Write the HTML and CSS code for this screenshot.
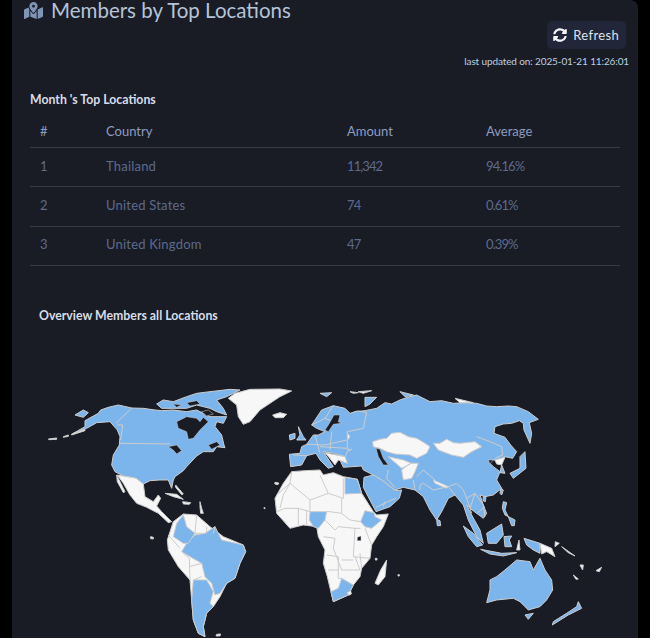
FILE: index.html
```html
<!DOCTYPE html>
<html lang="en">
<head>
<meta charset="utf-8">
<title>Members by Top Locations</title>
<link rel="stylesheet" href="styles.css">
</head>
<body>
<main class="card">
  <h1 class="title">
    <svg class="title-icon" viewBox="0 0 576 512"><path d="M288 0c-69.59 0-126 56.41-126 126 0 56.26 82.35 158.8 113.9 196.02 6.39 7.54 17.82 7.54 24.2 0C331.65 284.8 414 182.26 414 126 414 56.41 357.59 0 288 0zm0 168c-23.2 0-42-18.8-42-42s18.8-42 42-42 42 18.8 42 42-18.8 42-42 42zM20.12 215.95A32.006 32.006 0 0 0 0 245.66v250.32c0 11.32 11.43 19.06 21.94 14.86L160 448V214.92c-8.84-15.98-16.07-31.54-21.25-46.42L20.12 215.95zM288 359.67c-14.07 0-27.38-6.18-36.51-16.96-19.66-23.2-40.57-49.62-59.49-76.72V448l192 64V266c-18.92 27.09-39.82 53.52-59.49 76.72-9.13 10.77-22.44 16.95-36.51 16.95zm266.06-198.51L416 224v288l139.88-55.95A31.996 31.996 0 0 0 576 426.34V176.02c0-11.32-11.43-19.06-21.94-14.86z"/></svg>
    Members by Top Locations
  </h1>
  <div class="toolbar">
    <button class="refresh" type="button">
      <svg class="refresh-icon" viewBox="0 0 512 512"><path d="M370.72 133.28C339.458 104.008 298.888 87.962 255.848 88c-77.458.068-144.328 53.178-162.791 126.85-1.344 5.363-6.122 9.15-11.651 9.15H24.103c-7.498 0-13.194-6.807-11.807-14.176C33.933 94.924 134.813 8 256 8c66.448 0 126.791 26.136 171.315 68.685L463.03 40.97C478.149 25.851 504 36.559 504 57.941V192c0 13.255-10.745 24-24 24H345.941c-21.382 0-32.09-25.851-16.971-40.971l41.75-41.749zM32 296h134.059c21.382 0 32.09 25.851 16.971 40.971l-41.75 41.75c31.262 29.273 71.835 45.319 114.876 45.28 77.418-.07 144.315-53.144 162.787-126.849 1.344-5.363 6.122-9.15 11.651-9.15h57.304c7.498 0 13.194 6.807 11.807 14.176C478.067 417.076 377.187 504 256 504c-66.448 0-126.791-26.136-171.315-68.685L48.97 471.03C33.851 486.149 8 475.441 8 454.059V320c0-13.255 10.745-24 24-24z"/></svg>
      Refresh
    </button>
    <p class="updated">last updated on: 2025-01-21 11:26:01</p>
  </div>
  <h2 class="section-title">Month 's Top Locations</h2>
  <table class="locations">
    <thead>
      <tr><th class="c-num">#</th><th class="c-country">Country</th><th class="c-amount">Amount</th><th>Average</th></tr>
    </thead>
    <tbody>
      <tr><td class="num">1</td><td>Thailand</td><td class="num">11,342</td><td class="num">94.16%</td></tr>
      <tr><td class="num">2</td><td>United States</td><td class="num">74</td><td class="num">0.61%</td></tr>
      <tr><td class="num">3</td><td>United Kingdom</td><td class="num">47</td><td class="num">0.39%</td></tr>
    </tbody>
  </table>
  <h2 class="section-title overview">Overview Members all Locations</h2>
  <svg class="map" viewBox="30 380 590 258" role="img" aria-label="World map of members">
    <!-- Americas: 3x coordinates from (30,380) -->
    <g transform="translate(30 380) scale(.3333)" class="land">
      <path class="w" d="M615 40L660 28 750 27 785 33 750 50 720 70 690 90 660 125 640 133 625 110 620 75 595 55Z"/>
      <path class="w" d="M728 105L750 98 770 103 760 113 735 113Z"/>
      <path class="b" d="M165 122L205 100 212 90 235 82 265 75 305 84 340 85 375 90 395 92 430 90 470 95 500 90 520 100 540 110 590 110 580 130 560 125 555 140 575 165 582 195 585 203 560 200 550 215 520 215 500 228 470 260 460 272 435 290 430 300 425 325 415 300 390 300 360 302 340 312 318 295 280 288 255 275 245 255 250 225 268 195 270 170 262 150 240 125 200 128 170 145 130 160 165 140Z"/>
      <path class="b" d="M380 72L400 60 430 65 470 50 500 40 540 35 600 28 630 30 590 50 560 60 580 85 590 105 560 95 540 85 500 75 470 85 430 85 395 85Z"/>
      <path class="b" d="M135 105L160 90 175 98 160 112Z"/>
      <path class="sea" d="M440 125L470 110 500 115 510 125 520 112 535 125 510 150 490 175 475 178 470 155 445 145Z"/>
      <path class="sea" d="M415 200L440 195 455 212 440 222 430 210ZM470 68L500 62 510 72 480 78ZM430 72L455 74 440 82ZM515 95L535 90 550 102 530 108ZM535 195L560 185 570 195 545 208Z"/>
      <path class="ln" d="M305 84L258 130M270 190L420 192M262 135L278 135 272 180"/>
      <path class="w" d="M262 285L318 295 340 312 345 350 370 365 385 345 392 355 380 378 395 395 410 410 425 425 415 428 385 400 350 382 320 370 300 345 280 310Z"/>
      <path class="w" d="M260 285L285 335 280 338 262 305ZM405 340L440 343 460 358 430 350ZM458 365L482 368 478 373 460 372ZM55 177L80 174 80 178 57 179ZM100 170L115 165 115 169 100 172ZM125 162L165 148 165 152 125 165ZM362 470L370 472 370 477 362 476ZM560 763L572 762 570 768 558 768ZM735 307L746 309 744 313 735 311ZM702 383L705 383 705 386 702 386ZM437 315L460 342 455 344 437 322ZM510 365L515 385 520 400 512 400 510 380Z"/>
      <path class="w" d="M430 425L460 402 500 405 540 440 580 470 640 495 647 515 630 550 615 595 590 610 570 650 550 680 530 700 520 740 525 770 505 760 490 720 485 660 480 600 445 560 415 510 412 480Z"/>
      <path class="b" d="M455 515L470 490 495 465 525 460 555 440 575 480 640 495 647 515 630 550 615 595 590 610 570 640 555 645 545 610 525 590 515 550 480 530Z"/>
      <path class="b" d="M430 470L440 430 460 405 470 440 495 460 475 490 460 490Z"/>
      <path class="b" d="M490 600L530 600 550 635 540 670 550 680 530 700 520 740 525 770 505 760 490 720 485 660Z"/>
      <path class="ln" d="M415 465L450 505M455 515L478 535 480 600M478 560L515 550M515 590L490 600M500 405L495 460 525 460M530 440L530 460M555 440L550 462"/>
    </g>
    <!-- Asia and Oceania: 3x coordinates from (320,380) -->
    <g transform="translate(320 380) scale(.3333)" class="land">
      <path class="b" d="M75 115L105 95 135 92 170 85 195 68 215 72 240 60 262 52 290 45 330 65 365 62 400 70 435 68 470 70 500 78 530 80 565 78 590 80 625 95 655 118 628 128 635 160 630 190 612 150 610 130 598 122 575 130 550 132 525 140 522 160 555 172 572 195 590 215 578 235 555 230 540 240 520 240 505 245 520 260 540 275 530 300 545 325 520 345 495 350 480 345 490 375 500 400 490 415 470 400 450 385 440 375 455 405 480 450 490 490 470 470 445 420 430 375 405 345 385 355 365 395 350 420 330 390 310 350 285 330 250 322 225 330 185 300 150 280 130 270 125 258 70 262 60 240 75 225 85 208 75 190 60 180Z"/>
      <path class="w" d="M158 185L180 178 200 175 215 160 240 157 265 170 290 175 315 190 330 200 320 220 290 235 270 225 225 222 200 215 180 205 160 200Z"/>
      <path class="w" d="M340 190L360 190 380 178 400 188 420 190 465 185 485 200 455 215 430 232 395 225 355 210Z"/>
      <path class="w" d="M245 270L270 250 295 250 285 275 275 295 250 300ZM205 230L250 240 275 250 245 265ZM340 300L385 320 380 325 345 310ZM525 240L555 232 545 255 530 252Z"/>
      <path class="w" d="M55 165L75 155 90 168 85 178 60 178Z"/>
      <path class="ln" d="M470 170L510 185 545 200 548 225 525 235M290 290L310 270 345 300M300 330L300 315 310 310 340 330 385 320 410 310 430 330 440 355 465 340 490 375 495 410M385 320L405 345M440 355L455 400M465 340L450 385M470 400L495 380M225 322L200 295 205 270M280 300L285 330M40 210L75 225"/>
      <path class="sea" d="M168 205L180 208 190 235 205 255 190 255 175 230ZM505 240L520 240 510 252Z"/>
      <path class="b" d="M600 230L615 215 618 265 580 295 570 280 600 265ZM545 255L555 280 540 278ZM543 325L550 330 545 345 540 340ZM490 350L498 352 496 365 489 362ZM350 418L360 422 362 437 352 437ZM550 365L560 368 555 390 565 410 555 405 547 385ZM565 410L585 420 583 437 575 437ZM430 438L460 460 488 495 470 500 445 470ZM482 508L545 520 590 518 550 528 510 522ZM500 460L545 432 550 465 530 490 505 490ZM552 470L575 468 568 480 575 500 555 500ZM612 475L660 490 660 520 640 510 620 495ZM510 600L530 590 555 570 590 540 630 545 640 570 660 535 675 570 695 600 698 630 680 660 660 680 625 690 600 665 580 655 530 660 500 668 510 630ZM615 705L640 700 625 718ZM697 735L745 705 785 685 775 665 770 680 740 700 700 725ZM135 52L170 52 150 72 135 80ZM240 35L280 45 255 50ZM0 40L35 38 20 50Z"/>
      <path class="w" d="M660 490L695 505 705 530 680 515 665 522ZM725 500L765 528 745 518ZM780 555L790 555 788 570ZM828 572L845 562 838 575ZM760 585L775 597 768 598ZM90 35L115 38 100 40ZM115 35L155 32 130 40ZM405 55L460 68 420 68ZM590 510L600 510 597 480ZM706 485L718 490 705 500ZM200 540L195 590 175 615 165 610 182 570Z"/>
    </g>
    <!-- Africa and Arabia: 3x coordinates from (270,470) -->
    <g transform="translate(270 470) scale(.3333)" class="land">
      <path class="w" d="M65 5L105 2 150 0 160 15 190 8 220 20 262 28 275 70 310 125 320 135 355 132 340 170 320 200 305 225 300 265 275 295 270 320 250 345 235 375 190 395 172 320 160 280 165 240 145 200 140 170 100 165 60 175 20 130 15 85 40 40Z"/>
      <path class="b" d="M120 125L170 125 165 150 145 175 130 170 118 150Z"/>
      <path class="b" d="M225 22L262 28 275 70 225 72Z"/>
      <path class="b" d="M285 122L312 128 315 140 335 150 305 175 285 170 272 155Z"/>
      <path class="b" d="M205 355L215 325 250 345 235 375 190 395 183 365Z"/>
      <path class="w" d="M232 368L242 362 244 372 236 376ZM15 38L26 40 24 44 15 42ZM316 265L321 265 321 270 316 270ZM384 314L388 314 388 318 384 318Z"/>
      <path class="ln" d="M65 5L60 40 20 75M60 40L120 90 175 70 150 15M175 70L220 85 220 25M120 90L120 125 85 115 45 115 20 125M85 115L85 165M110 120L110 165M170 125L180 125 215 130 215 85M215 130L240 150 272 155M165 150L195 180 205 170 255 175 272 175M160 200L195 205 190 235 215 300 270 300M255 175L250 260 300 265M285 175L305 225M170 255L205 260 205 325M205 300L175 300M215 325L205 325M255 260L270 300M215 270L250 270M270 250L275 295M60 40L40 75 30 115"/>
      <path class="sea" d="M262 202L273 198 273 212 262 212Z"/>
      <path class="b" d="M282 22L310 15 335 30 375 62 395 60 388 85 360 110 318 125 280 52Z"/>
      <path class="ln" d="M318 112L360 92 378 85M340 110L345 95"/>
    </g>
    <!-- Europe: 3x coordinates from (270,385) -->
    <g transform="translate(270 385) scale(.3333)" class="land">
      <path class="b" d="M125 120L155 75 190 62 225 70 240 85 262 78 290 82 280 130 232 140 232 195 245 193 232 200 225 215 190 205 160 200 190 245 175 250 150 225 138 205 110 212 95 240 62 245 58 208 90 205 95 185 110 178 130 150 145 150 165 140 140 130Z"/>
      <path class="b" d="M85 125L100 155 108 165 80 165 90 150ZM58 150L75 145 75 160 60 165Z"/>
      <path class="w" d="M165 203L225 215 232 235 205 225 195 240 178 218Z"/>
      <path class="ln" d="M135 150L150 205M110 178L165 180 230 165M150 185L232 190M185 140L180 195M70 210L110 212M125 120L165 100 190 62M165 100L205 115"/>
      <path class="sea" d="M175 120L192 90 210 90 205 110 215 115 190 118 175 140 165 135Z"/>
    </g>
  </svg>
</main>
</body>
</html>
```

FILE: styles.css
```css
* { box-sizing: border-box; }
html, body { margin: 0; height: 638px; overflow: hidden; background: #000; }
body { font-family: "Lato", "Noto Sans", sans-serif; }
.card {
  margin: 0 12px;
  height: 660px;
  padding: 0 18px;
  background: #191c25;
  border-radius: 0 8px 0 0;
}
.title {
  display: flex;
  align-items: center;
  gap: 8px;
  margin: 0 0 0 -6px;
  height: 20px;
  font-size: 20.5px;
  line-height: 20px;
  font-weight: 400;
  color: #b5c3d9;
}
.title-icon { width: 19px; height: 17px; fill: #8095b6; }
.toolbar {
  display: flex;
  flex-direction: column;
  align-items: flex-end;
  margin-right: -9px;
}
.refresh {
  display: flex;
  align-items: center;
  gap: 6px;
  height: 28px;
  margin: 1px 3px 0 0;
  padding: 0 7px 0 6px;
  border: 0;
  border-radius: 5px;
  background: #212638;
  color: #dce3ee;
  font: 400 13px "Lato", sans-serif;
  letter-spacing: .35px;
}
.refresh-icon { width: 14px; height: 14px; fill: #f4f6fa; }
.updated {
  margin: 5px 0 0;
  font-size: 10px;
  line-height: 14px;
  color: #bdcfe0;
  letter-spacing: -.12px;
}
.section-title {
  margin: 24px 0 0;
  font-size: 12.3px;
  line-height: 16px;
  font-weight: 700;
  color: #d7dde8;
}
.locations {
  width: 590px;
  border-collapse: collapse;
  table-layout: fixed;
  font-size: 13px;
}
.locations th, .locations td {
  padding: 0 0 0 10px;
  text-align: left;
  border-bottom: 1px solid #383b46;
}
.locations th {
  height: 39.5px;
  padding-bottom: 8px;
  vertical-align: bottom;
  line-height: 16px;
  font-weight: 400;
  color: #8a9cc2;
}
.locations td { height: 39.3px; padding-bottom: 3px; color: #5d6a8c; letter-spacing: .2px; }
.locations .num { letter-spacing: -.9px; }
.c-num { width: 66px; }
.c-country { width: 241px; }
.c-amount { width: 139px; }
.overview { margin: 42px 0 0 9px; }
.map { display: block; width: 590px; height: 258px; margin-top: 56px; }
.land path { stroke: #ccc; stroke-width: 3; stroke-linejoin: round; }
.land .b { fill: #7cb5ec; }
.land .w { fill: #f7f7f7; }
.land .sea { fill: #191c25; stroke: #ccc; stroke-width: 1.6; }
.land .ln { fill: none; }
```
